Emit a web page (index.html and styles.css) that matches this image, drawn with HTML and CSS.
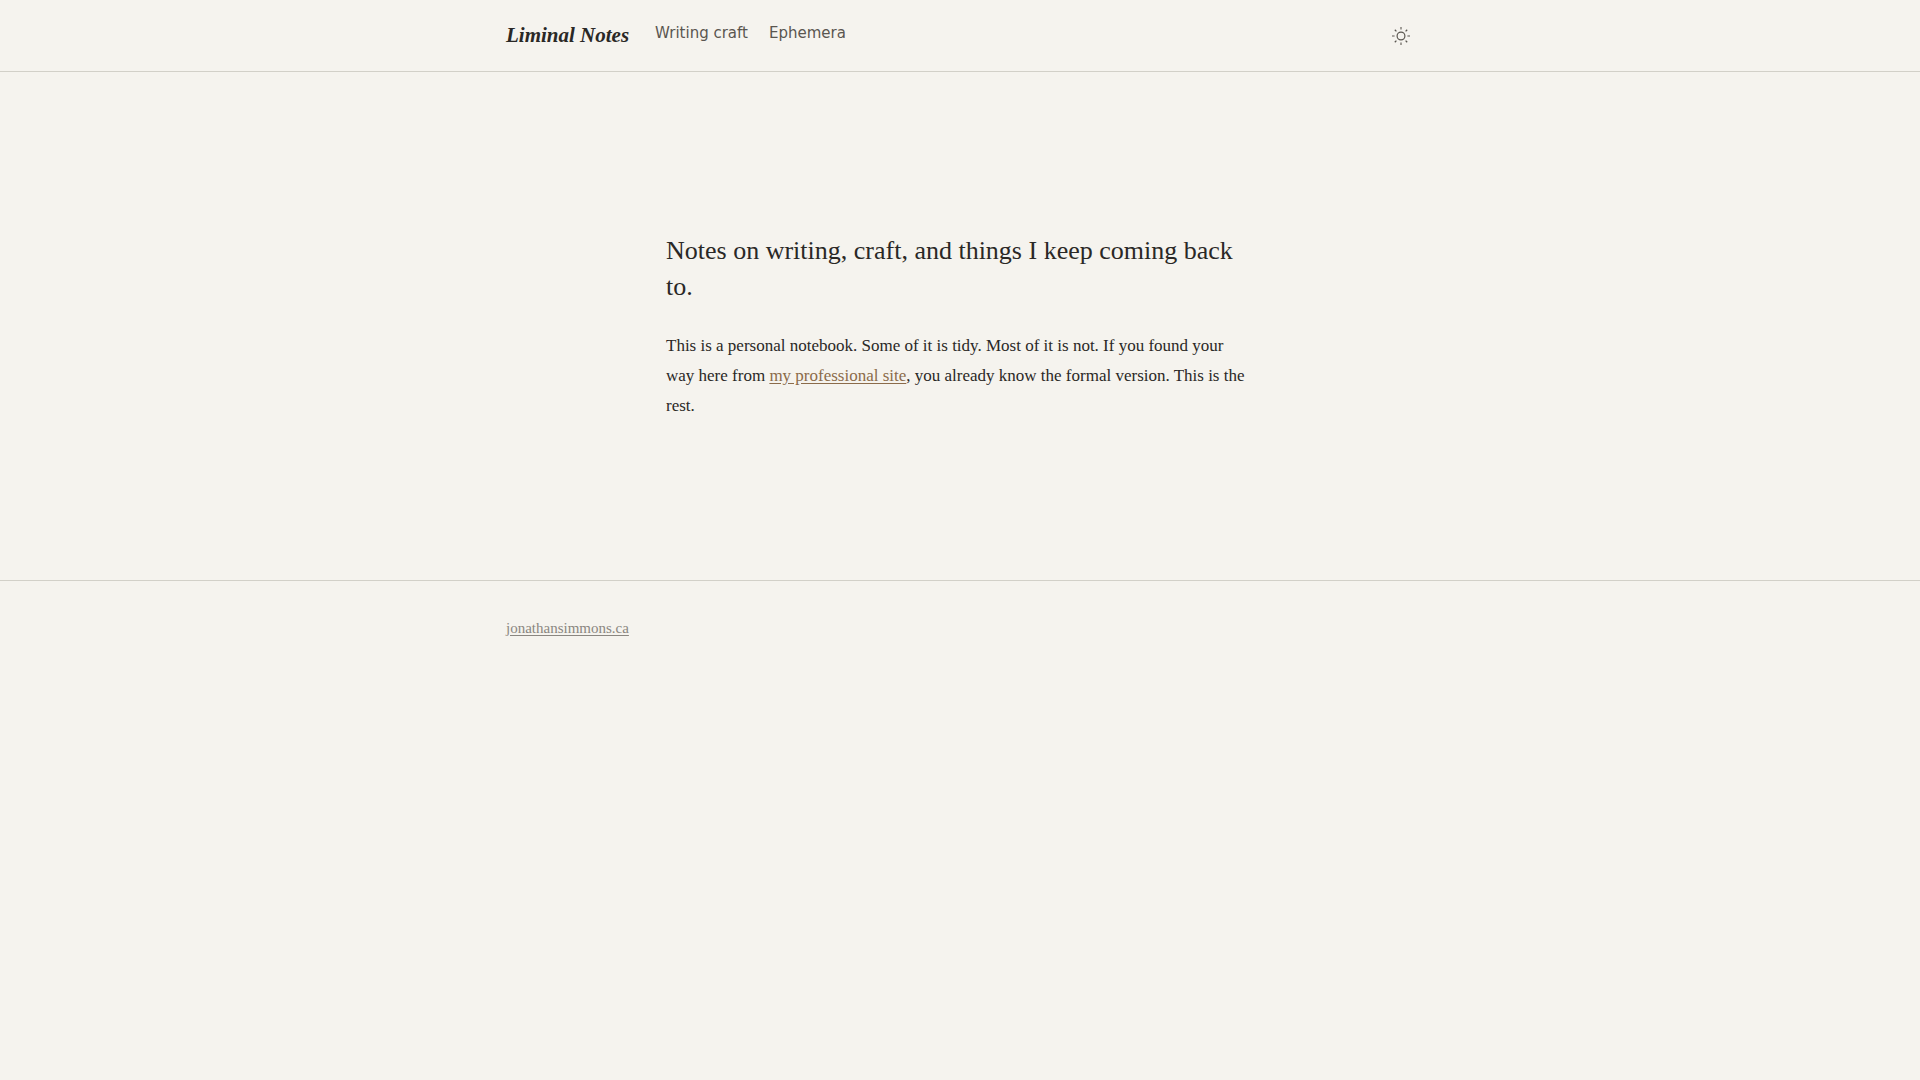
FILE: index.html
```html
<!DOCTYPE html>
<html lang="en">
<head>
    <meta charset="UTF-8">
    <meta name="viewport" content="width=device-width, initial-scale=1.0">
    <title>Liminal Notes</title>
    <link rel="stylesheet" href="styles.css">
</head>
<body>
    <header class="site-header">
        <div class="wrap">
            <a href="#" class="site-title">Liminal Notes</a>
            <nav class="site-nav">
                <a href="#">Writing craft</a>
                <a href="#">Ephemera</a>
            </nav>
            <button type="button" class="theme-toggle" aria-label="Toggle theme">
                <svg viewBox="0 0 20 20" width="20" height="20" fill="none" stroke="currentColor" aria-hidden="true">
                    <circle cx="10" cy="10" r="3.9" stroke-width="1.2"/>
                    <path d="M10 1v2.6M10 16.4V19M1 10h2.6M16.4 10H19" stroke-width="1.1"/>
                    <path d="M3.8 3.8l1.6 1.6M14.6 14.6l1.6 1.6M3.8 16.2l1.6-1.6M14.6 5.4l1.6-1.6" stroke-width="1.3"/>
                </svg>
            </button>
        </div>
    </header>

    <main class="intro">
        <h1>Notes on writing, craft, and things I keep coming back to.</h1>
        <p>This is a personal notebook. Some of it is tidy. Most of it is not. If you found your way here from <a href="#">my professional site</a>, you already know the formal version. This is the rest.</p>
    </main>

    <footer class="site-footer">
        <div class="wrap">
            <a href="#">jonathansimmons.ca</a>
        </div>
    </footer>
</body>
</html>
```
FILE: styles.css
```css
* {
    box-sizing: border-box;
}

body {
    margin: 0;
    background-color: #f5f3ee;
    color: #2a2826;
    font-family: "Liberation Serif", serif;
    font-size: 17px;
    line-height: 30px;
}

.wrap {
    display: flex;
    align-items: flex-start;
    max-width: 960px;
    margin: 0 auto;
    padding: 0 26px;
}

.site-header {
    padding: 20px 0 19px;
    border-bottom: 1px solid #d2d0c8;
}

.site-title {
    margin-right: 26px;
    color: inherit;
    font-size: 21px;
    font-style: italic;
    font-weight: bold;
    text-decoration: none;
}

.site-nav {
    display: flex;
    gap: 21px;
    font-family: "DejaVu Sans", sans-serif;
    font-size: 15px;
    line-height: 26px;
}

.site-nav a {
    color: #5a5650;
    text-decoration: none;
}

.theme-toggle {
    display: flex;
    margin-left: auto;
    padding: 6px 3px;
    border: none;
    background: none;
    color: #5a5650;
    cursor: pointer;
}

.intro {
    max-width: 640px;
    margin: 0 auto;
    padding: 161px 26px 159px;
}

.intro h1 {
    margin: 0 0 26px;
    font-size: 26px;
    font-weight: normal;
    line-height: 36px;
}

.intro p {
    margin: 0;
}

.intro a {
    color: #8b6b4a;
    text-underline-offset: 2px;
}

.site-footer {
    padding: 32px 0;
    border-top: 1px solid #d2d0c8;
    font-size: 15px;
}

.site-footer a {
    color: #8a8680;
    text-underline-offset: 2px;
}
```
